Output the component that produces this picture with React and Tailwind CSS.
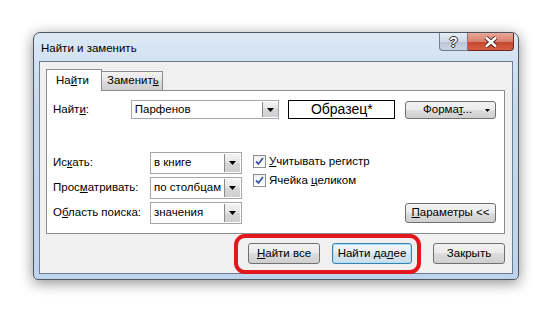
const btn =
  "flex items-center justify-center rounded-[3px] border border-[#707070] bg-[linear-gradient(#f2f2f2,#ebebeb_50%,#dddddd_50%,#cfcfcf)] text-black";

const Arrow = () => (
  <svg width="7" height="4" viewBox="0 0 7 4">
    <path d="M0 0H7L3.5 4Z" fill="#000" />
  </svg>
);

const DropBox = () => (
  <div className="flex h-full w-[16px] items-center justify-center border-l border-[#8a8a8a] bg-[linear-gradient(#f4f4f4,#e2e2e2_50%,#d6d6d6_50%,#d0d0d0)]">
    <Arrow />
  </div>
);

const Select = ({ value }) => (
  <div className="flex h-[22px] w-[92px] items-stretch border border-[#a4a7ad] bg-white">
    <div className="flex flex-1 items-center pl-[3px]">{value}</div>
    <div className="p-px">
      <DropBox />
    </div>
  </div>
);

const Check = ({ children }) => (
  <div className="flex h-[19px] items-center">
    <div className="flex h-[13px] w-[13px] items-center justify-center border border-[#8e8f8f] bg-[linear-gradient(#f0f0f0,#ffffff)]">
      <svg width="9" height="9" viewBox="0 0 9 9">
        <path d="M1 4.5L3.5 7L8 1" stroke="#3d5aa5" strokeWidth="1.8" fill="none" />
      </svg>
    </div>
    <span className="ml-[3px]">{children}</span>
  </div>
);

export default function App() {
  return (
    <div
      className="h-[313px] w-[553px] overflow-hidden bg-white pl-[33px] pt-[32px] text-[11.5px] text-black"
      style={{ fontFamily: '"Liberation Sans", Arial, sans-serif' }}
    >
      <div className="flex h-[248px] w-[486px] flex-col rounded-t-[7px] rounded-b-[5px] border border-[#4d5561] bg-[linear-gradient(180deg,#dce8f5,#c5d9ee_30%,#bed4ec)] shadow-[0_3px_14px_rgba(0,0,0,0.45)]">
        {/* title bar */}
        <div className="flex h-[28px] items-start">
          <div className="ml-[7px] mt-[7px] text-[11.5px] text-black">Найти и заменить</div>
          <div className="ml-auto mr-[4px] flex h-[18px]">
            <div className="flex w-[29px] items-center justify-center rounded-bl-[4px] border border-t-0 border-[#6f7d8f] bg-[linear-gradient(#e6edf5,#cfd9e5_50%,#b9c6d6_50%,#c9d5e2)]">
              <span
                className="text-[14px] font-bold leading-none text-white"
                style={{
                  textShadow:
                    "1px 0 0 #2a2a2a, -1px 0 0 #2a2a2a, 0 1px 0 #2a2a2a, 0 -1px 0 #2a2a2a",
                }}
              >
                ?
              </span>
            </div>
            <div className="flex w-[46px] items-center justify-center rounded-br-[4px] border border-l-0 border-t-0 border-[#6b2a20] bg-[linear-gradient(#eaa99a,#d9806d_50%,#c4472f_50%,#d65d40)]">
              <svg width="14" height="12" viewBox="0 0 14 12">
                <path d="M2 1.5L12 10.5M12 1.5L2 10.5" stroke="#3a1a14" strokeWidth="4.2" />
                <path d="M2 1.5L12 10.5M12 1.5L2 10.5" stroke="#fff" strokeWidth="2.4" />
              </svg>
            </div>
          </div>
        </div>

        {/* client */}
        <div className="relative mx-[5px] flex h-[213px] flex-col border border-[#6e7c90] bg-[#f0f0f0] pl-[6px] pr-[7px] pt-[7px]">
          <div className="flex h-[21px] items-end">
            <div className="relative z-10 -mb-px flex h-[22px] w-[56px] items-center border border-b-0 border-[#898c95] bg-white pl-[9px]">
              На<span className="underline">й</span>ти
            </div>
            <div className="flex h-[19px] w-[61px] items-center border border-b-0 border-l-0 border-[#898c95] bg-[linear-gradient(#f2f2f2,#e6e6e6_50%,#dcdcdc_50%,#cfcfcf)] pl-[5px]">
              Заменит<span className="underline">ь</span>
            </div>
          </div>

          <div className="flex h-[144px] flex-col border border-[#898c95] bg-white pl-[6px] pr-[8px] pt-[9px]">
            <div className="flex items-center">
              <div className="w-[78px]">
                Найт<span className="underline">и</span>:
              </div>
              <div className="flex h-[19px] w-[149px] items-stretch border border-[#a4a7ad] bg-white">
                <div className="flex flex-1 items-center pl-[3px]">Парфенов</div>
                <div className="py-px">
                  <DropBox />
                </div>
              </div>
              <div className="ml-[9px] flex h-[19px] w-[107px] items-center justify-center border border-black text-[14px]">
                Образец*
              </div>
              <div className={`${btn} relative ml-[10px] h-[18px] w-[91px]`}>
                <span className="-ml-[6px]">
                  Форма<span className="underline">т</span>...
                </span>
                <span className="absolute right-[5px] top-[7px]">
                  <svg width="5" height="3" viewBox="0 0 5 3">
                    <path d="M0 0H5L2.5 3Z" fill="#000" />
                  </svg>
                </span>
              </div>
            </div>

            <div className="mt-[33px] flex">
              <div className="flex flex-col gap-[3px]">
                <div className="flex items-center">
                  <div className="w-[97px]">
                    Ис<span className="underline">к</span>ать:
                  </div>
                  <Select value="в книге" />
                </div>
                <div className="flex items-center">
                  <div className="w-[97px]">
                    Прос<span className="underline">м</span>атривать:
                  </div>
                  <Select value="по столбцам" />
                </div>
                <div className="flex items-center">
                  <div className="w-[97px]">
                    О<span className="underline">б</span>ласть поиска:
                  </div>
                  <Select value="значения" />
                </div>
              </div>
              <div className="ml-[11px] flex flex-col">
                <Check>
                  <span className="underline">У</span>читывать регистр
                </Check>
                <Check>
                  Ячейка <span className="underline">ц</span>еликом
                </Check>
              </div>
              <div className={`${btn} mb-px ml-auto h-[20px] w-[91px] self-end`}>
                <span className="underline">П</span>араметры &lt;&lt;
              </div>
            </div>
          </div>

          <div className="mt-[9px] flex justify-end">
            <div className={`${btn} h-[21px] w-[72px]`}>
              <span className="underline">Н</span>айти все
            </div>
            <div className="ml-[12px] flex h-[21px] w-[80px] items-center justify-center rounded-[3px] border border-[#3c7fb1] bg-[linear-gradient(#f1f7fb,#e4eef5_50%,#d6e5ef_50%,#cddfeb)] shadow-[inset_0_0_0_1px_#a9e1f7]">
              Найти да<span className="underline">л</span>ее
            </div>
            <div className={`${btn} ml-[21px] h-[21px] w-[72px]`}>Закрыть</div>
          </div>

          <div className="absolute left-[194px] top-[172px] h-[40px] w-[187px] rounded-[11px] border-[4px] border-[#e3151d]" />
        </div>
      </div>
    </div>
  );
}
